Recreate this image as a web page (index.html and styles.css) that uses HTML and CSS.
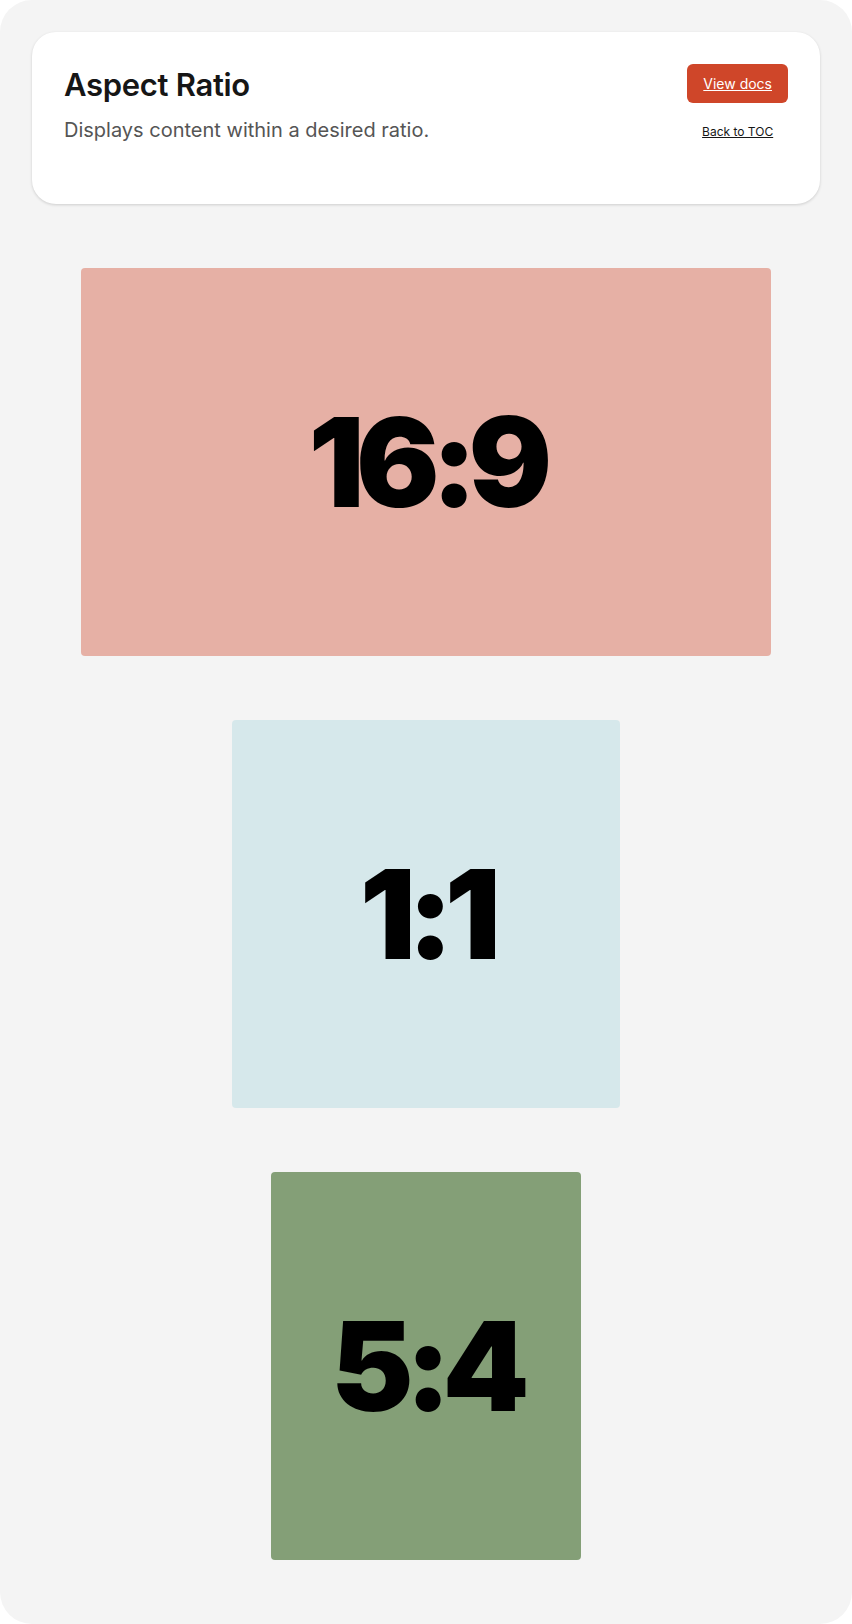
FILE: index.html
```html
<!DOCTYPE html>
<html lang="en">
  <head>
    <meta charset="UTF-8" />
    <meta name="viewport" content="width=device-width, initial-scale=1.0" />
    <title>Aspect Ratio</title>
    <link rel="stylesheet" href="styles.css">
  </head>
  <body>
    <div class="page">
      <header class="intro">
        <div class="intro-text">
          <h1>Aspect Ratio</h1>
          <p>Displays content within a desired ratio.</p>
        </div>
        <div class="intro-links">
          <a class="docs-btn" href="#">View docs</a>
          <a class="toc-link" href="#">Back to TOC</a>
        </div>
      </header>

      <main class="ratios">
        <div class="ratio ratio-wide"><span>16:9</span></div>
        <div class="ratio ratio-square"><span>1:1</span></div>
        <div class="ratio ratio-tall"><span>5:4</span></div>
      </main>
    </div>
  </body>
</html>
```

FILE: styles.css
```css
body {
  margin: 0;
  background: #ffffff;
  font-family: Inter, "Noto Sans", sans-serif;
  color: #161616;
}
.page {
  box-sizing: border-box;
  min-height: 1624px;
  padding: 32px 32px 64px;
  background: #f4f4f4;
  border-radius: 32px;
}
.intro {
  box-sizing: border-box;
  height: 172px;
  padding: 32px;
  display: flex;
  justify-content: space-between;
  align-items: flex-start;
  background: #ffffff;
  border-radius: 24px;
  box-shadow: 0 1px 3px rgba(0, 0, 0, 0.16);
}
.intro h1 {
  margin: 0;
  padding-top: 2px;
  font-size: 31px;
  line-height: 38px;
  font-weight: 600;
  letter-spacing: -0.01em;
}
.intro p {
  margin: 12px 0 0;
  font-size: 20px;
  line-height: 28px;
  color: #555555;
}
.intro-links {
  display: flex;
  flex-direction: column;
  align-items: center;
  gap: 21px;
}
.docs-btn {
  display: block;
  padding: 10px 16px;
  line-height: 19px;
  font-size: 14px;
  color: #ffffff;
  background: #cf4629;
  border-radius: 6px;
}
.toc-link {
  font-size: 12px;
  line-height: 16px;
  color: #161616;
}
.ratios {
  display: flex;
  flex-direction: column;
  align-items: center;
  gap: 64px;
  margin-top: 64px;
}
.ratio {
  height: 388px;
  display: flex;
  align-items: center;
  justify-content: center;
  border-radius: 4px;
}
.ratio span {
  font-size: 124px;
  font-weight: 900;
  letter-spacing: -0.07em;
  line-height: 1;
  color: #000000;
}
.ratio-wide {
  aspect-ratio: 16 / 9;
  background: #e6b0a5;
}
.ratio-square {
  aspect-ratio: 1 / 1;
  background: #d6e8eb;
}
.ratio-tall {
  aspect-ratio: 4 / 5;
  background: #849f77;
}
```
